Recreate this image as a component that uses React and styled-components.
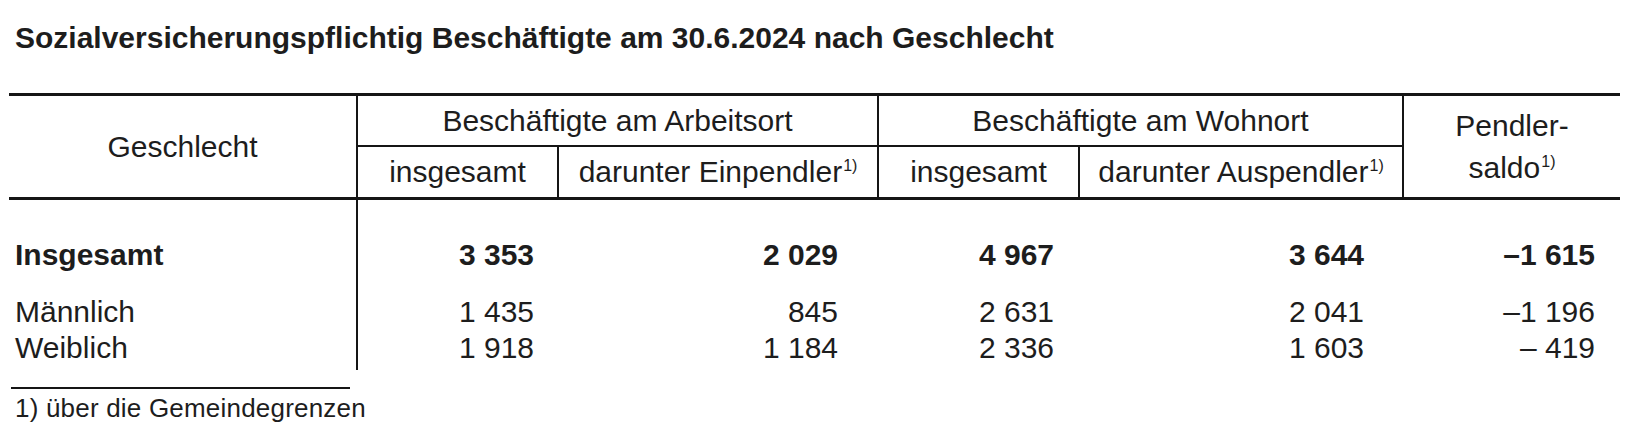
import React from 'react';
import styled, { createGlobalStyle } from 'styled-components';

const GlobalStyle = createGlobalStyle`
  html, body {
    margin: 0;
    padding: 0;
    background: #ffffff;
  }
  body {
    font-family: "Liberation Sans", Arial, Helvetica, sans-serif;
    color: #1d1d1d;
  }
`;

const COLS = '347px 201px 320px 201px 324px 218px';
const LINE = '#151515';

const Page = styled.div`
  box-sizing: border-box;
  width: 1643px;
  height: 448px;
  padding: 22px 0 0 9px;
`;

const Title = styled.h1`
  margin: 0 0 39px 6px;
  font-size: 30px;
  line-height: 32px;
  font-weight: 700;
`;

const Table = styled.div`
  width: 1611px;
  border-top: 3px solid ${LINE};
`;

const Head = styled.div`
  display: grid;
  grid-template-columns: ${COLS};
  grid-template-rows: 51px 50px;
  border-bottom: 3px solid ${LINE};
`;

const HeadCell = styled.div`
  box-sizing: border-box;
  grid-column: ${(p) => p.$col};
  grid-row: ${(p) => p.$row || 'auto'};
  display: flex;
  align-items: center;
  justify-content: center;
  text-align: center;
  font-size: 30px;
  line-height: ${(p) => (p.$tall ? '42px' : '32px')};
  border-left: ${(p) => (p.$left ? `2px solid ${LINE}` : 'none')};
  border-bottom: ${(p) => (p.$bottom ? `2px solid ${LINE}` : 'none')};
`;

const Sup = styled.span`
  font-size: 16px;
  line-height: 1;
  vertical-align: 11px;
  margin-left: 1px;
`;

const Row = styled.div`
  display: grid;
  grid-template-columns: ${COLS};
  height: ${(p) => p.$height}px;
  font-weight: ${(p) => (p.$bold ? 700 : 400)};
  --pad: ${(p) => p.$pad}px;
`;

const Label = styled.div`
  padding: var(--pad) 0 0 6px;
  font-size: 30px;
  line-height: 36px;
`;

const Num = styled.div`
  box-sizing: border-box;
  padding: var(--pad) ${(p) => p.$right}px 0 0;
  text-align: right;
  font-size: 30px;
  line-height: 36px;
  border-left: ${(p) => (p.$line ? `2px solid ${LINE}` : 'none')};
`;

const FootRule = styled.div`
  width: 339px;
  height: 2px;
  margin: 17px 0 0 2px;
  background: ${LINE};
`;

const Footnote = styled.p`
  margin: 4px 0 0 6px;
  font-size: 26px;
  line-height: 30px;
  letter-spacing: 0.2px;
`;

const PADS = [23, 39, 24, 38, 25];

const rows = [
  { label: 'Insgesamt', bold: true, height: 94, pad: 37, values: ['3 353', '2 029', '4 967', '3 644', '–1 615'] },
  { label: 'Männlich', height: 36, pad: 0, values: ['1 435', '845', '2 631', '2 041', '–1 196'] },
  { label: 'Weiblich', height: 40, pad: 0, values: ['1 918', '1 184', '2 336', '1 603', '– 419'] },
];

const App = () => (
  <>
    <GlobalStyle />
    <Page>
      <Title>Sozialversicherungspflichtig Beschäftigte am 30.6.2024 nach Geschlecht</Title>
      <Table>
        <Head>
          <HeadCell $col="1" $row="1 / 3">Geschlecht</HeadCell>
          <HeadCell $col="2 / 4" $row="1" $left $bottom>
            Beschäftigte am Arbeitsort
          </HeadCell>
          <HeadCell $col="4 / 6" $row="1" $left $bottom>
            Beschäftigte am Wohnort
          </HeadCell>
          <HeadCell $col="6" $row="1 / 3" $left $tall>
            <span>
              Pendler-
              <br />
              saldo<Sup>1)</Sup>
            </span>
          </HeadCell>
          <HeadCell $col="2" $row="2" $left>insgesamt</HeadCell>
          <HeadCell $col="3" $row="2" $left>
            <span>
              darunter Einpendler<Sup>1)</Sup>
            </span>
          </HeadCell>
          <HeadCell $col="4" $row="2" $left>insgesamt</HeadCell>
          <HeadCell $col="5" $row="2" $left>
            <span>
              darunter Auspendler<Sup>1)</Sup>
            </span>
          </HeadCell>
        </Head>
        {rows.map((r) => (
          <Row key={r.label} $bold={r.bold} $height={r.height} $pad={r.pad}>
            <Label>{r.label}</Label>
            {r.values.map((v, i) => (
              <Num key={i} $right={PADS[i]} $line={i === 0}>
                {v}
              </Num>
            ))}
          </Row>
        ))}
      </Table>
      <FootRule />
      <Footnote>1) über die Gemeindegrenzen</Footnote>
    </Page>
  </>
);

export default App;
